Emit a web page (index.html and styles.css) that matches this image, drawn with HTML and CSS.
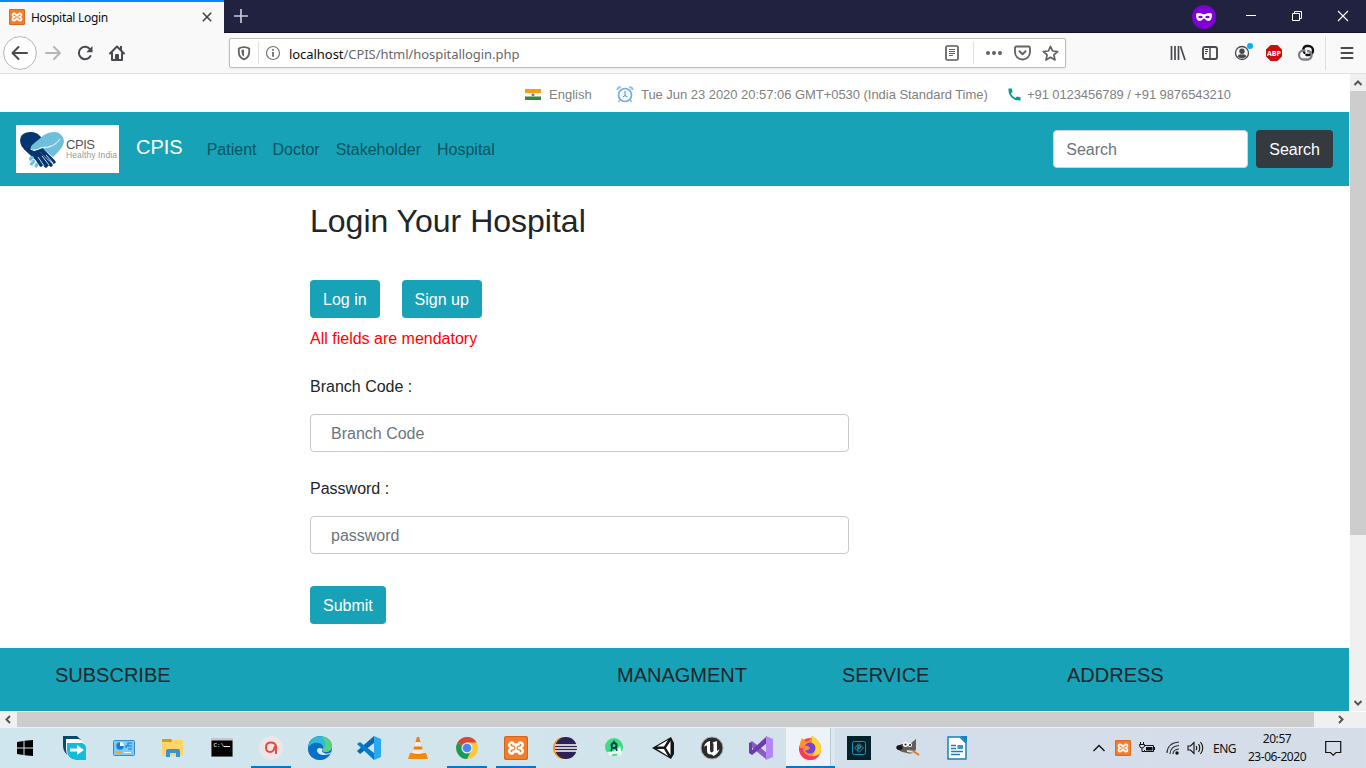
FILE: index.html
```html
<!DOCTYPE html>
<html lang="en">
<head>
<meta charset="utf-8">
<title>Hospital Login</title>
<link rel="stylesheet" href="styles.css">
</head>
<body>
<svg class="defs" width="0" height="0">
  <symbol id="xampp" viewBox="0 0 24 24"><rect width="24" height="24" rx="2" fill="#d0651c"/><rect x="1" y="1" width="22" height="22" rx="2" fill="#f47c2a"/><path d="M12 8.500H9.500Q9 6 7.500 6.500Q4.500 7.500 5.500 10Q6.500 12 9 12Q6.500 12 5.500 14Q4.500 16.500 7.500 17.500Q9 18 9.500 15.500H14.500Q15 18 16.500 17.500Q19.500 16.500 18.500 14Q17.500 12 15 12Q17.500 12 18.500 10Q19.500 7.500 16.500 6.500Q15 6 14.500 8.500H12M12 8.500V10.500M12 15.500V13.500" fill="none" stroke="#fff" stroke-width="2.500" stroke-linecap="round" stroke-linejoin="round"/></symbol>
</svg>
<div class="screen">
  <header class="tabbar">
    <div class="tab">
      <svg class="tab-icon" width="16" height="16"><use href="#xampp"/></svg>
      <span class="tab-title">Hospital Login</span>
      <svg class="tab-close" width="10" height="10" viewBox="0 0 10 10"><path d="M.8.8 9.200 9.200M9.200.8.8 9.200" stroke="#444" stroke-width="1.600"/></svg>
    </div>
    <svg class="new-tab" width="14" height="14" viewBox="0 0 14 14"><path d="M7 0V14M0 7H14" stroke="#c8c8d2" stroke-width="1.700"/></svg>
    <svg class="private" width="24" height="24" viewBox="0 0 24 24"><circle cx="12" cy="12" r="12" fill="#8000d7"/><path d="M4 9.500Q4 8 6 8Q9 8 10.500 9Q12 9.700 13.500 9Q15 8 18 8Q20 8 20 9.500Q20 16 16.500 16Q14.500 16 13 14Q12 13 11 14Q9.500 16 7.500 16Q4 16 4 9.500Z" fill="#fff"/><ellipse cx="8.500" cy="12" rx="2.200" ry="1.300" fill="#8000d7"/><ellipse cx="15.500" cy="12" rx="2.200" ry="1.300" fill="#8000d7"/></svg>
    <div class="win-controls">
      <svg width="46" height="32"><path d="M18 15.500H28" stroke="#fff"/></svg>
      <svg width="46" height="32"><path d="M18.500 13.500H25.500V20.500H18.500ZM20.500 13.500V11.500H27.500V18.500H25.500" fill="none" stroke="#fff"/></svg>
      <svg width="46" height="32"><path d="M18 11 28 21M28 11 18 21" stroke="#fff" stroke-width="1.100"/></svg>
    </div>
  </header>

  <div class="toolbar">
    <svg class="back" width="34" height="34" viewBox="0 0 34 34"><circle cx="17" cy="17" r="16.400" fill="#fff" stroke="#b5b5b6"/><path d="M24 17H10M15.500 11 9.500 17 15.500 23" fill="none" stroke="#4a4a4e" stroke-width="2" stroke-linecap="round" stroke-linejoin="round"/></svg>
    <svg class="tool" viewBox="0 0 32 32"><path d="M9 16H22.500M17 10 23 16 17 22" fill="none" stroke="#b6b6b7" stroke-width="2" stroke-linecap="round" stroke-linejoin="round"/></svg>
    <svg class="tool" viewBox="0 0 32 32"><path d="M21.200 12.500A6.200 6.200 0 1 0 21.500 19" fill="none" stroke="#4a4a4e" stroke-width="2" stroke-linecap="round"/><path d="M23.500 9V15.200H17.300Z" fill="#4a4a4e"/></svg>
    <svg class="tool" viewBox="0 0 32 32"><path d="M9 16.500 16 9.500 23 16.500M11 15.500V23H21V15.500" fill="none" stroke="#4a4a4e" stroke-width="2" stroke-linecap="round" stroke-linejoin="round"/><path d="M14 23V18Q14 17 15 17H17Q18 17 18 18V23ZM19 9H21V13H19Z" fill="#4a4a4e"/></svg>
    <div class="urlbar">
      <svg width="28" height="28" viewBox="0 0 28 28"><path d="M14 8.200Q17 8.200 19.200 9.600V13Q19.200 18.500 14 20.300Q8.800 18.500 8.800 13V9.600Q11 8.200 14 8.200Z" fill="none" stroke="#626266" stroke-width="1.800"/><path d="M14 10.500V17.800Q11.500 16.500 11.500 13V11Q12.300 10.500 14 10.500Z" fill="#626266"/></svg>
      <i class="url-sep"></i>
      <svg width="30" height="28" viewBox="0 0 30 28"><circle cx="14" cy="14" r="6.500" fill="none" stroke="#737377" stroke-width="1.200"/><path d="M14 13V17.800M14 10V11.800" stroke="#66666a" stroke-width="1.700"/></svg>
      <span class="url"><b>localhost</b>/CPIS/html/hospitallogin.php</span>
      <svg class="reader" width="14" height="16" viewBox="0 0 14 16"><rect x="1" y="1" width="12" height="14" rx="1.500" fill="none" stroke="#5c5c60" stroke-width="1.700"/><path d="M4 4.500H10M4 6.500H10M4 8.500H10M4 10.500H8" stroke="#5c5c60"/></svg>
      <i class="url-sep reader-sep"></i>
      <svg class="dots" width="16" height="6"><circle cx="2" cy="3" r="2"/><circle cx="8" cy="3" r="2"/><circle cx="14" cy="3" r="2"/></svg>
      <svg class="pocket" width="17" height="16" viewBox="0 0 17 16"><path d="M1 3Q1 1.500 2.500 1.500H14.500Q16 1.500 16 3V7A7.500 7.500 0 0 1 1 7Z" fill="none" stroke="#626266" stroke-width="1.800"/><path d="M5.500 6.200 8.500 9.200 11.500 6.200" fill="none" stroke="#626266" stroke-width="2" stroke-linecap="round" stroke-linejoin="round"/></svg>
      <svg width="17" height="17" viewBox="0 0 17 17"><path d="M8.500 1.300 10.600 6 15.700 6.500 11.900 9.900 13 15 8.500 12.300 4 15 5.100 9.900 1.300 6.500 6.400 6Z" fill="none" stroke="#626266" stroke-width="1.700" stroke-linejoin="round"/></svg>
    </div>
    <div class="extensions">
      <svg class="tool" viewBox="0 0 32 32"><path d="M9.500 9V23M13 9V23M16.500 9V23M18.500 9.300 23 23" fill="none" stroke="#4a4a4e" stroke-width="1.700"/></svg>
      <svg class="tool" viewBox="0 0 32 32"><rect x="9" y="10" width="14" height="12" rx="2" fill="none" stroke="#4a4a4e" stroke-width="1.900"/><path d="M16 10V22" stroke="#4a4a4e" stroke-width="1.500"/><path d="M11 12.500H14M11 14.500H14M11 16.500H13" stroke="#4a4a4e"/></svg>
      <svg class="tool" viewBox="0 0 32 32"><circle cx="16" cy="16" r="6.500" fill="none" stroke="#4a4a4e" stroke-width="1.300"/><circle cx="16" cy="14.300" r="2.700" fill="#4a4a4e"/><path d="M11.300 19.500Q13 16.800 16 17.500Q19 16.800 20.700 19.500Q18.700 21.300 16 21.300T11.300 19.500Z" fill="#4a4a4e"/><circle cx="24" cy="9" r="3" fill="#00b0ff"/></svg>
      <svg class="tool" viewBox="0 0 32 32"><path d="M12.600 8H19.400L24 12.600V19.400L19.400 24H12.600L8 19.400V12.600Z" fill="#c70d0d"/><text class="abp" x="16" y="18.700" text-anchor="middle" textLength="14" lengthAdjust="spacingAndGlyphs">ABP</text></svg>
      <svg class="tool" viewBox="0 0 32 32"><path d="M14.500 16A4.200 4.200 0 0 1 16 9H18.500A4.400 4.400 0 0 1 18.500 18H16.500" fill="none" stroke="#111" stroke-width="2.400" stroke-linecap="round"/><path d="M18 14A4.200 4.200 0 0 1 16.500 22.500H13.500A4.400 4.400 0 0 1 13.500 13.500H14.500" fill="none" stroke="#808084" stroke-width="2.300" stroke-linecap="round"/></svg>
    </div>
    <i class="tool-sep"></i>
    <svg width="40" height="32" viewBox="0 0 40 32"><path d="M15.500 11H26.500M15.500 16H26.500M15.500 21H26.500" stroke="#4a4a4e" stroke-width="2" stroke-linecap="round"/></svg>
  </div>

  <div class="viewport">
    <main class="page">
      <div class="contact-bar">
        <svg class="flag" width="16" height="12"><rect width="16" height="4" fill="#ff9b12"/><rect y="4" width="16" height="4" fill="#fafafa"/><rect y="7.500" width="16" height="3.500" fill="#2f8c37"/><circle cx="8" cy="5.700" r="1.500" fill="#7774c0"/></svg>
        <span class="lang">English</span>
        <svg class="clock" width="18" height="17" viewBox="0 0 18 17"><circle cx="9" cy="9" r="6.500" fill="#f4faff" stroke="#72ade4" stroke-width="1.700"/><path d="M1.500 4Q1.500 1 4.800 1.200M16.500 4Q16.500 1 13.200 1.200" fill="none" stroke="#88bdeb" stroke-width="2"/><path d="M9 5V9.500L11.500 11M9 9.500 7 11" fill="none" stroke="#6188b8"/><path d="M4 14 2.500 16M14 14 15.500 16" fill="none" stroke="#88bdeb" stroke-width="1.500"/></svg>
        <span class="time">Tue Jun 23 2020 20:57:06 GMT+0530 (India Standard Time)</span>
        <svg class="phone" width="13" height="13" viewBox="0 0 13 13"><path d="M.5.500H3.700L4.500 4 2.900 5.500Q4.200 8.500 7.300 10L9 8.500 12.500 9.200V12.500Q7 12.800 3.600 9.400T.5.500Z" fill="#009f8b"/></svg>
        <span class="number">+91 0123456789 / +91 9876543210</span>
      </div>
      <nav class="navbar">
        <svg class="logo" width="103" height="48" viewBox="0 0 103 48">
          <rect width="103" height="48" fill="#fff"/>
          <path d="M5.500 21Q2.500 14 6 10Q10 6.500 16 7Q21 7.500 24 11L27 14 17 25 36 39 30 42Q26 41 13 29Q8 25 5.500 21Z" fill="#05366e"/>
          <path d="M15 24Q14 22 16 20L28 10Q35 5.500 42 7.500Q48 11 48 17Q47 22 43 26L37 32Q31 27 26 23Q20 27 15 24Z" fill="#6ebfdb"/>
          <path d="M20 27 26 25 37 36M19 29 30 41M22 28 35 40M26 27 38 37M17 28 25 40" fill="none" stroke="#05366e" stroke-width="3.500" stroke-linecap="round"/>
          <path d="M22 32 28 41M26 31 33 40M30 30 37 38" stroke="#fff" stroke-width=".8"/>
          <path d="M14.500 24Q18 27 26 22.500Q38 23 44 14" fill="none" stroke="#fff"/>
          <path d="M14.500 34 16 32.500M15.500 39 17.500 36.500M20 41 21 39.500" stroke="#6ebfdb" stroke-width="3.300" stroke-linecap="round"/>
          <text class="logo-name" x="50" y="24" textLength="29">CPIS</text><text class="logo-tag" x="50" y="33" textLength="51">Healthy India</text>
        </svg>
        <span class="brand">CPIS</span>
        <a>Patient</a><a>Doctor</a><a>Stakeholder</a><a>Hospital</a>
        <input class="search" placeholder="Search">
        <button class="btn dark">Search</button>
      </nav>
      <section class="login">
        <h2>Login Your Hospital</h2>
        <div class="actions"><button class="btn">Log in</button><button class="btn">Sign up</button></div>
        <p class="notice">All fields are mendatory</p>
        <label>Branch Code :</label>
        <input class="field" placeholder="Branch Code">
        <label>Password :</label>
        <input class="field" placeholder="password">
        <button class="btn submit">Submit</button>
      </section>
      <footer class="footer"><span>SUBSCRIBE</span><span>MANAGMENT</span><span>SERVICE</span><span>ADDRESS</span></footer>
    </main>
    <div class="vscroll">
      <svg width="16" height="17"><path d="M4.500 11 8 7.500 11.500 11" fill="none" stroke="#555" stroke-width="2"/></svg>
      <div class="vthumb"></div>
      <svg width="16" height="17"><path d="M4.500 7 8 10.500 11.500 7" fill="none" stroke="#555" stroke-width="2"/></svg>
    </div>
  </div>
  <div class="hscroll">
    <svg width="17" height="15"><path d="M10 4 6.500 7.500 10 11" fill="none" stroke="#555" stroke-width="2"/></svg>
    <div class="hthumb"></div>
    <svg class="hright" width="17" height="15"><path d="M6 4 9.500 7.500 6 11" fill="none" stroke="#555" stroke-width="2"/></svg>
  </div>

  <footer class="taskbar">
    <div class="apps">
      <div class="app"><svg viewBox="0 0 24 24"><path d="M3 6 9.500 5V11.500H3ZM10.500 4.800 19 4V11.500H10.500ZM3 12.500H9.500V19L3 18ZM10.500 12.500H19V20L10.500 19.200Z" fill="#000"/></svg></div>
      <div class="app"><svg viewBox="0 0 24 24"><path d="M0 0H14L18 4H6V20Q0 16 0 10Z" fill="#064a70"/><path d="M3 3H16L23 9V24H12Q3 22 3 13Z" fill="#fff"/><path d="M4 7H19Q23 8 23 12V24H13Q4 23 4 14Z" fill="#11bddb"/><path d="M7 12.500H14V9L21 14 14 19V15.500H7Z" fill="#fff"/></svg></div>
      <div class="app"><svg viewBox="0 0 24 24"><rect x="1.500" y="4.500" width="21" height="15" rx="1" fill="#78cdfa" stroke="#3b8ac2"/><circle cx="8" cy="10" r="3.700" fill="#167ed0"/><path d="M8 10V6A4 4 0 0 1 12 10Z" fill="#fff"/><path d="M14 12V10H16V7H20M16 10H20M16 13H20" fill="none" stroke="#187dc1" stroke-width="1.200"/><path d="M4 16.500H10" stroke="#f7a323" stroke-width="2"/><path d="M12 16.500H19" stroke="#fff"/></svg></div>
      <div class="app"><svg viewBox="0 0 24 24"><path d="M1 3H10L12 5V9H1Z" fill="#dc9b0a"/><path d="M1 6H10L12 4H22V20H1Z" fill="#ffd568"/><path d="M5 21V15Q5 13 7 13H17Q19 13 19 15V21H15V17H9V21Z" fill="#3a92d5"/></svg></div>
      <div class="app"><svg viewBox="0 0 24 24"><rect x="1" y="2" width="22" height="19" fill="#c5c7c9"/><rect x="1.500" y="4.500" width="21" height="16" fill="#050505"/><text class="cmd" x="3.500" y="10.500">C:\</text><path d="M14 10.500H20" stroke="#eee"/></svg></div>
      <div class="app running"><svg viewBox="0 0 24 24"><circle cx="12" cy="12" r="12" fill="#eee6e6"/><path d="M17 18V10Q16 6.500 12 6.500Q7 6.500 7 11.500Q7 16 11 16Q15 16 16 10" fill="none" stroke="#e6483d" stroke-width="1.900"/></svg></div>
      <div class="app"><svg viewBox="0 0 24 24"><circle cx="12" cy="12" r="12" fill="#126bbc"/><path d="M1 8Q5-1 14 .3Q24 2 24 11Q23 16 17 16Q14 16 15 13Q16 8 10 7Q4 6 0 12Z" fill="#2dbbd5"/><path d="M13 0Q24 2 24 11Q23 16 17 16Q14 16 15 13Q21 9 13 0Z" fill="#5bd27a"/><path d="M0 12Q4 6 10 8Q15 9 14 13Q8 12 9 17Q13 22 22 18Q16 26 7 23Q0 20 0 12Z" fill="#0870c6"/><path d="M15 13Q9 10 9 15Q11 21 22 18L24 16Q18 19 15 16.500Q13 15 15 13Z" fill="#dcebf0"/></svg></div>
      <div class="app"><svg viewBox="0 0 24 24"><path d="M17 0 24 3V21L17 24Z" fill="#2ca8ef"/><path d="M17 0V7L3 18 0 15Z" fill="#0968ae"/><path d="M0 8 3 6 17 17V24Z" fill="#087ccb"/></svg></div>
      <div class="app"><svg viewBox="0 0 24 24"><path d="M4 17H20L22 23H2Z" fill="#f18b09"/><path d="M11 1H13L18 18Q12 21 6 18Z" fill="#ef7d09"/><path d="M9.500 6H14.500L16 10.500H8ZM7 13.500H17L18 17Q12 19 6 17Z" fill="#eee"/></svg></div>
      <div class="app running"><svg viewBox="0 0 24 24"><circle cx="12" cy="12" r="11" fill="#fbc938"/><path d="M12 12 2.500 6.500Q6 1 12 1Q19 1 21.500 6.500H12Z" fill="#db4539"/><path d="M2.500 6.500Q-1 14 4 19.500Q7 23 12 23L16 15 12 12Z" fill="#169b5f"/><circle cx="12" cy="12" r="5.500" fill="#eee"/><circle cx="12" cy="12" r="4.300" fill="#4688f1"/></svg></div>
      <div class="app running"><svg viewBox="0 0 24 24"><use href="#xampp"/></svg></div>
      <div class="app"><svg viewBox="0 0 24 24"><circle cx="11" cy="12" r="11" fill="#f7931e"/><circle cx="13" cy="12" r="11" fill="#2c2255"/><path d="M2 9H24M2 12H24M2 15H24" stroke="#fff" stroke-width="1.500"/></svg></div>
      <div class="app"><svg viewBox="0 0 24 24"><circle cx="12" cy="11" r="9" fill="#3ddc84"/><path d="M5 16Q14 16 18 10L20 18Q16 22 15 18Q12 17 8 20Z" fill="#e7fff0"/><circle cx="12" cy="9.500" r="2.500" fill="none" stroke="#073f49" stroke-width="2"/><path d="M12 4.500V7M10.500 11 9 15M13.500 11 15 15" stroke="#073f49" stroke-width="1.500"/></svg></div>
      <div class="app"><svg viewBox="0 0 24 24"><path d="M1 12 20 1 23 7V18L20 23Z" fill="#161616"/><path d="M6 10.500 17 4 13 10.500ZM6 13H13L17 20ZM15 12 19.500 5V19Z" fill="#fff"/></svg></div>
      <div class="app"><svg viewBox="0 0 24 24"><circle cx="12" cy="12" r="11" fill="#2c2c2c" stroke="#aaa"/><path d="M4 11Q5 6 10 5V14Q10 16.500 12 16.500L13.500 15V8L12.500 6.500L17 5V15L19.500 13Q18 18 13.500 20L12 18.500Q7 19 7 15V9.500Q5.500 9 4 11Z" fill="#fff"/></svg></div>
      <div class="app"><svg viewBox="0 0 24 24"><path d="M0 7 3 5 18 17V24L0 9Z" fill="#8c5ac5"/><path d="M0 7V17L3 19 18 7V0L3 14V7Z" fill="#6c3bac"/><path d="M17 0 24 3V21L17 24Z" fill="#b487f4"/></svg></div>
      <div class="app running active"><svg viewBox="0 0 24 24"><circle cx="12" cy="13" r="11" fill="#ff4052"/><path d="M2 7 4 2 8 6Q12 5 14 0Q23 5 23 14Q22 23 13 23Q5 23 2 15Z" fill="#ff9130"/><path d="M14 0Q23 5 23 14Q21 22 14 21Q20 13 14 7Z" fill="#ffd635"/><path d="M1 12Q2 23 12 24Q19 24 21.500 18Q16 22 9 19Q5 17 5 12Z" fill="#ff365e"/><circle cx="12" cy="12" r="5.500" fill="#7446d4"/><path d="M6 10Q10 9 12 12Q10 15 7 14Z" fill="#ff9130"/></svg></div>
      <div class="app"><svg viewBox="0 0 24 24"><path d="M0 0H24V24H0Z" fill="#04222b"/><rect x="5.500" y="5.500" width="13" height="13" rx="2" fill="none" stroke="#1797b7"/><path d="M12 7.500 16.500 12 12 16.500 7.500 12Z" fill="#14313c" stroke="#597783"/><path d="M11 14.500V9.500Q15 9.500 13 12H11" fill="none" stroke="#18aacd"/></svg></div>
      <div class="app"><svg viewBox="0 0 24 24"><path d="M5 8 14 8 20 3V13Q18 19 11 17Q3 16 1 12Z" fill="#635e55"/><ellipse cx="3.500" cy="11.500" rx="3.200" ry="2.500" fill="#171717"/><circle cx="9.500" cy="8.500" r="2.500" fill="#fff"/><circle cx="14" cy="9" r="2.100" fill="#fff"/><circle cx="9.500" cy="8.500" r="1" fill="#111"/><circle cx="14" cy="9" r="1" fill="#111"/><path d="M11 15 19 16" stroke="#ddd" stroke-width="2"/><path d="M17 15 23 19" stroke="#e37b21" stroke-width="2"/></svg></div>
      <div class="app"><svg viewBox="0 0 24 24"><path d="M3 1H15L21 7V23H3Z" fill="#fff" stroke="#1683bd" stroke-width="1.500"/><path d="M15 0H22V7Z" fill="#1683bd"/><path d="M6 9.500H11M6 12.500H11M6 15.500H18M6 18.500H15" stroke="#1683bd" stroke-width="1.300"/><rect x="12.500" y="9" width="5.500" height="4" fill="#3c96c4"/></svg></div>
    </div>
    <div class="tray">
      <svg width="14" height="10"><path d="M1.500 8 7 2.500 12.500 8" fill="none" stroke="#111" stroke-width="1.400"/></svg>
      <svg class="tray-xampp" width="16" height="16"><use href="#xampp"/></svg>
      <svg class="battery" width="17" height="14"><path d="M6 4.500H14.500V10.500H5.500V9" fill="none" stroke="#111"/><path d="M7 6H13.500V9.500H7ZM15 6H16V9H15Z" fill="#111"/><path d="M1.500 1V3M4.500 1V3M.5 3.500H5.500V5Q5 7 3 7Q.5 7 .5 4ZM3 7V10.500H5.500" fill="none" stroke="#111"/></svg>
      <svg class="wifi" width="14" height="14"><path d="M1 12Q1.500 2 13 1M4 13Q4.500 5 13 4.500M7 13Q7 8.500 13 8" fill="none" stroke="#333" stroke-width="1.200"/><circle cx="11" cy="12" r="1.700" fill="#111"/></svg>
      <svg class="sound" width="17" height="14"><path d="M1 5H3.500L7 1.500V12.500L3.500 9H1ZM9 5Q10.500 7 9 9M11.500 3Q14 7 11.500 11M13.500 1Q18 7 13.500 13" fill="none" stroke="#111" stroke-width="1.100"/></svg>
      <span class="kbd">ENG</span>
      <div class="datetime"><span class="hour">20:57</span><span class="date">23-06-2020</span></div>
      <svg class="message" width="17" height="17"><path d="M.7 1.500H15.700V12.500H11L8.200 15.200 5.400 12.500H.7Z" fill="none" stroke="#111" stroke-width="1.200"/></svg>
    </div>
  </footer>
</div>
</body>
</html>
```
FILE: styles.css
```css
* { box-sizing: border-box; }
body { margin: 0; font-family: "Liberation Sans", Arial, sans-serif; color: #212529; overflow: hidden; }
svg { display: block; flex: none; }
.defs { position: absolute; }
.screen { width: 1366px; height: 768px; display: flex; flex-direction: column; background: #fff; }
input, button { font: 16px "Liberation Sans", Arial, sans-serif; margin: 0; }

.tabbar { height: 33px; background: #20223f; border-bottom: 1px solid #111329; display: flex; align-items: flex-start; flex: none; }
.tab { width: 224px; height: 33px; background: #f9f9fa; border-top: 2px solid #0a84ff; display: flex; align-items: center; padding: 0 12px 2px 9px; }
.tab-title { font: 12px "Noto Sans", sans-serif; letter-spacing: -.3px; color: #0c0c0d; margin: 2px 0 0 6px; white-space: nowrap; }
.tab-close { margin-left: auto; }
.new-tab { margin: 9px 0 0 10px; }
.private { margin: 5px 12px 0 auto; }
.win-controls { display: flex; }

.toolbar { height: 41px; background: #f9f9fa; border-bottom: 1px solid #e0e0e1; display: flex; align-items: center; flex: none; }
.back { margin-left: 3px; }
.tool { width: 32px; height: 32px; }
.urlbar { width: 837px; height: 30px; margin-left: 96px; border: 1px solid #bdbdbe; border-radius: 2px; background: #fff; box-shadow: 0 1px 3px rgba(0,0,0,.08); display: flex; align-items: center; padding-right: 6px; }
.url-sep { width: 1px; height: 22px; background: #dedee0; }
.url { font: 13px "Noto Sans", sans-serif; letter-spacing: -.05px; color: #68686c; white-space: nowrap; padding-top: 2px; }
.url b { font-weight: 400; color: #0c0c0d; }
.reader { margin-left: auto; }
.reader-sep { margin: 0 12px 0 14px; }
.dots { fill: #626266; }
.pocket { margin: 0 11px 0 12px; }
.extensions { display: flex; margin-left: 96px; }
.abp { font: bold 7px "Open Sans", sans-serif; fill: #fff; }
.tool-sep { width: 1px; height: 34px; background: #dedee0; margin-left: 3px; }

.viewport { height: 637px; display: flex; flex: none; }
.page { width: 1349px; margin-right: 1px; }
.contact-bar { height: 38px; display: flex; align-items: center; padding: 3px 0 0 525px; font-size: 13px; color: #818181; white-space: nowrap; }
.lang { margin-left: 8px; width: 67px; }
.time { margin-left: 7px; width: 367px; letter-spacing: -.04px; }
.number { margin-left: 6px; letter-spacing: -.09px; }
.navbar { height: 74px; background: #17a2b8; display: flex; align-items: center; padding: 0 16px; }
.logo-name { font: 13px "Liberation Sans", sans-serif; fill: #555; }
.logo-tag { font: 8.500px "Liberation Sans", sans-serif; fill: #999; }
.brand { font-size: 20px; line-height: 30px; color: #fff; margin: 0 16px 5px 17px; }
.navbar a { padding: 2px 8px 0; line-height: 24px; color: #0c5560; }
.search { width: 195px; height: 38px; margin: 0 8px 0 auto; padding: 7px 12px 5px; border: 1px solid #ced4da; border-radius: 4px; }
::placeholder { color: #6c757d; opacity: 1; }
.btn { height: 38px; padding: 2px 13px 0; border: 0; border-radius: 4px; background: #17a2b8; color: #fff; white-space: nowrap; }
.dark { background: #343a40; }
.login { height: 462px; width: 849px; padding: 16px 0 0 310px; }
h2 { font-size: 32px; font-weight: 400; line-height: 38px; margin: 0 0 40px; }
.actions { display: flex; gap: 22px; }
.notice { margin: 9px 0 24px; line-height: 24px; color: #f00; }
label { display: block; line-height: 24px; }
.field { display: block; width: 539px; height: 38px; margin: 15px 0 25px; padding: 7px 20px 5px; border: 1px solid #c9c9c9; border-radius: 4px; }
.submit { margin-top: 7px; }
.footer { height: 63px; background: #17a2b8; display: grid; grid-template-columns: 562px 225px 225px 1fr; padding: 15px 0 0 55px; font-size: 20px; line-height: 24px; }
.vscroll { width: 16px; background: #f0f0f0; display: flex; flex-direction: column; justify-content: space-between; }
.vthumb { height: 444px; background: #cdcdcd; margin-bottom: auto; }
.hscroll { height: 17px; background: #f0f0f0; border-top: 1px solid #fff; display: flex; flex: none; padding-bottom: 1px; }
.hthumb { width: 1297px; background: #cdcdcd; }
.hright { margin-left: 19px; }

.taskbar { height: 40px; display: flex; background: linear-gradient(90deg, #d0e6ee, #d2e4eb 48%, #d4deeb 68%, #d5dde8); flex: none; }
.apps { display: flex; width: 982px; padding-left: 1px; }
.app { flex: 1; display: flex; align-items: center; justify-content: center; }
.app > svg { width: 24px; height: 24px; }
.cmd { font: 6px "Liberation Mono", monospace; fill: #fff; }
.running { background: linear-gradient(#0078d7, #0078d7) center bottom / 40px 2px no-repeat; }
.active { background: linear-gradient(#0078d7, #0078d7) center bottom / 100% 2px no-repeat, linear-gradient(90deg, #edf3f8 44px, #b6cbd8 44px 45px, #dce8f0 45px); }
.tray { width: 384px; display: flex; align-items: center; padding-left: 110px; border-right: 1px solid #d7e0eb; font: 12px "Noto Sans", sans-serif; color: #111; }
.tray-xampp { margin-left: 9px; }
.battery { margin-left: 8px; }
.wifi { margin-left: 10px; }
.sound { margin-left: 7px; }
.kbd { margin-left: 9px; width: 25px; letter-spacing: -.5px; }
.datetime { display: flex; flex-direction: column; align-items: center; width: 60px; margin-left: 9px; font-size: 12px; line-height: 18px; white-space: nowrap; letter-spacing: -.45px; }
.message { margin-left: 18px; }
```
